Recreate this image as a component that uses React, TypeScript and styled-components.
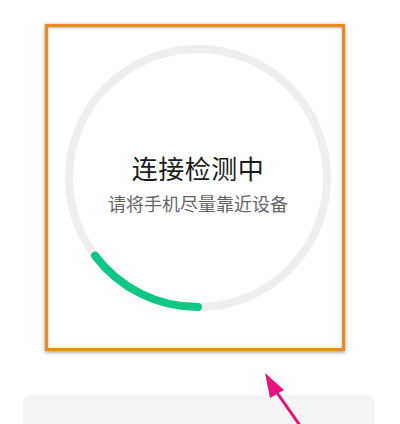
import styled, { createGlobalStyle } from "styled-components";

const GlobalStyle = createGlobalStyle`
  html, body {
    margin: 0;
    padding: 0;
    background: #ffffff;
    font-family: "Noto Sans CJK SC", "Noto Sans", sans-serif;
  }
`;

const Page = styled.div`
  position: relative;
  width: 400px;
  height: 424px;
  overflow: hidden;
  display: flex;
  flex-direction: column;
`;

const Frame = styled.div`
  box-sizing: border-box;
  flex-shrink: 0;
  margin: 24px 0 0 45px;
  width: 300px;
  height: 327px;
  border: 3px solid #ec8a1c;
  box-shadow: 0 1px 4px rgba(0, 0, 0, 0.45), inset 0 1px 3px rgba(0, 0, 0, 0.3);
  padding: 17px 0 0 16px;
`;

const Dial = styled.div`
  display: grid;
  width: 268px;
  height: 268px;

  & > * {
    grid-area: 1 / 1;
  }
`;

const Labels = styled.div`
  display: flex;
  flex-direction: column;
  align-items: center;
  justify-content: center;
  padding-top: 10px;
  gap: 6px;
`;

const Title = styled.div`
  font-size: 26px;
  line-height: 34px;
  color: #1c1c1c;
  letter-spacing: 0.5px;
`;

const Hint = styled.div`
  font-size: 18px;
  line-height: 24px;
  color: #666666;
`;

const Panel = styled.div`
  flex-shrink: 0;
  margin: 44px 0 0 23px;
  width: 352px;
  height: 60px;
  border-radius: 8px;
  background: #f4f4f4;
`;

const Pointer = styled.svg`
  position: absolute;
  left: 255px;
  top: 365px;
`;

const R = 129;
const C = 2 * Math.PI * R;
const progress = 0.147;

export default function App() {
  return (
    <Page>
      <GlobalStyle />
      <Frame>
        <Dial>
          <svg width="268" height="268" viewBox="0 0 268 268">
            <circle cx="134" cy="134" r={R} fill="none" stroke="#eeeeee" strokeWidth="8" />
            <circle
              cx="134"
              cy="134"
              r={R}
              fill="none"
              stroke="#0fc886"
              strokeWidth="8"
              strokeLinecap="round"
              strokeDasharray={`${C * progress} ${C}`}
              transform="rotate(90 134 134)"
            />
          </svg>
          <Labels>
            <Title>连接检测中</Title>
            <Hint>请将手机尽量靠近设备</Hint>
          </Labels>
        </Dial>
      </Frame>
      <Panel />
      <Pointer width="60" height="60" viewBox="0 0 60 60">
        <line x1="46" y1="62" x2="18" y2="22" stroke="#e8117f" strokeWidth="3" strokeLinecap="round" />
        <polygon points="10,8 29,25 15,33" fill="#e8117f" />
      </Pointer>
    </Page>
  );
}
